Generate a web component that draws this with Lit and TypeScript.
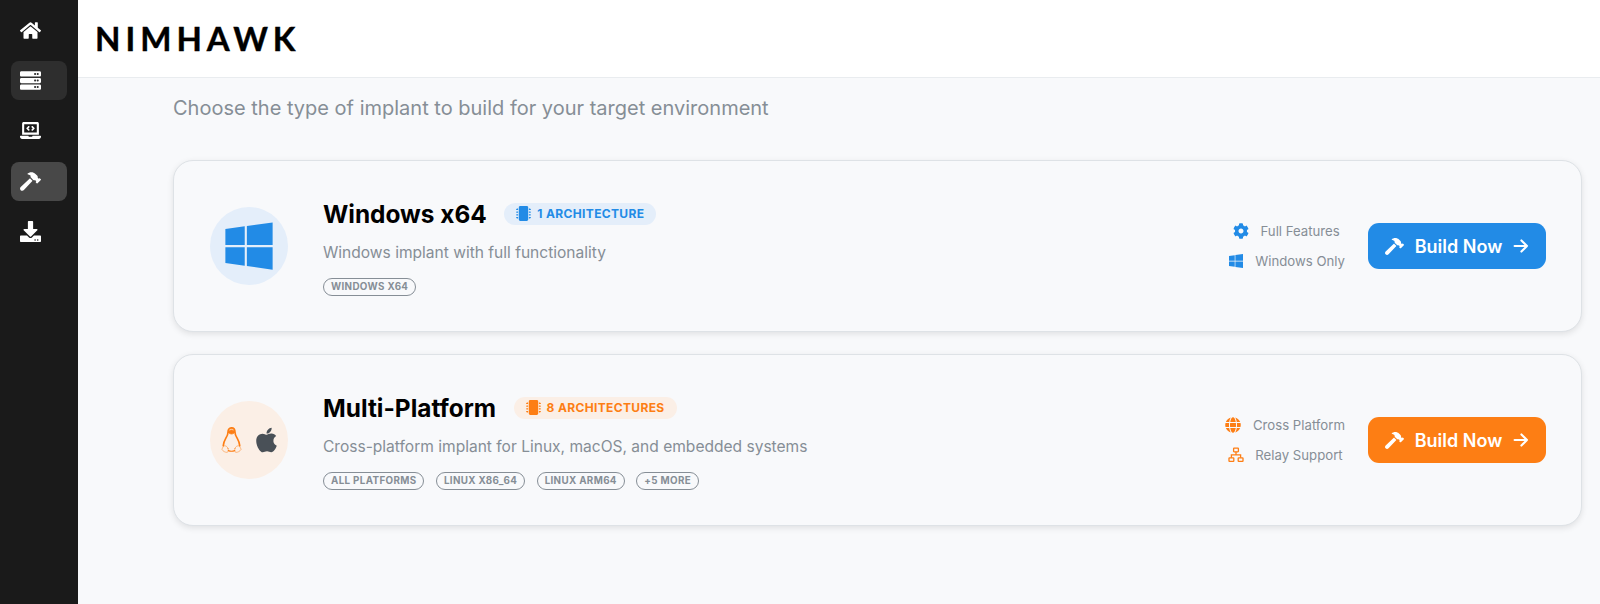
import { LitElement, html, css, svg } from "lit";
import { customElement } from "lit/decorators.js";

const P = {
  home: ["0 0 576 512", "M280.37 148.26L96 300.11V464a16 16 0 0 0 16 16l112.06-.29a16 16 0 0 0 15.92-16V368a16 16 0 0 1 16-16h64a16 16 0 0 1 16 16v95.64a16 16 0 0 0 16 16.05L464 480a16 16 0 0 0 16-16V300L295.67 148.26a12.19 12.19 0 0 0-15.3 0zM571.6 251.47L488 182.56V44.05a12 12 0 0 0-12-12h-56a12 12 0 0 0-12 12v72.61L318.47 43a48 48 0 0 0-61 0L4.34 251.47a12 12 0 0 0-1.6 16.9l25.5 31A12 12 0 0 0 45.15 301l235.22-193.74a12.19 12.19 0 0 1 15.3 0L530.9 301a12 12 0 0 0 16.9-1.6l25.5-31a12 12 0 0 0-1.7-16.93z"],
  server: ["0 0 512 512", "M480 160H32c-17.673 0-32-14.327-32-32V64c0-17.673 14.327-32 32-32h448c17.673 0 32 14.327 32 32v64c0 17.673-14.327 32-32 32zm-48-88c-13.255 0-24 10.745-24 24s10.745 24 24 24 24-10.745 24-24-10.745-24-24-24zm-64 0c-13.255 0-24 10.745-24 24s10.745 24 24 24 24-10.745 24-24-10.745-24-24-24zm112 248H32c-17.673 0-32-14.327-32-32v-64c0-17.673 14.327-32 32-32h448c17.673 0 32 14.327 32 32v64c0 17.673-14.327 32-32 32zm-48-88c-13.255 0-24 10.745-24 24s10.745 24 24 24 24-10.745 24-24-10.745-24-24-24zm-64 0c-13.255 0-24 10.745-24 24s10.745 24 24 24 24-10.745 24-24-10.745-24-24-24zm112 248H32c-17.673 0-32-14.327-32-32v-64c0-17.673 14.327-32 32-32h448c17.673 0 32 14.327 32 32v64c0 17.673-14.327 32-32 32zm-48-88c-13.255 0-24 10.745-24 24s10.745 24 24 24 24-10.745 24-24-10.745-24-24-24zm-64 0c-13.255 0-24 10.745-24 24s10.745 24 24 24 24-10.745 24-24-10.745-24-24-24z"],
  laptop: ["0 0 640 512", "M255.03 261.65c6.25 6.25 16.38 6.25 22.63 0l11.31-11.31c6.25-6.25 6.25-16.38 0-22.63L253.25 192l35.71-35.72c6.25-6.25 6.25-16.38 0-22.63l-11.31-11.31c-6.25-6.25-16.38-6.25-22.63 0l-58.34 58.34c-6.25 6.25-6.25 16.38 0 22.63l58.35 58.34zm96.01-11.3l11.31 11.31c6.25 6.25 16.38 6.25 22.63 0l58.34-58.34c6.25-6.25 6.25-16.38 0-22.63l-58.34-58.34c-6.25-6.25-16.38-6.25-22.63 0l-11.31 11.31c-6.25 6.25-6.25 16.38 0 22.63L386.75 192l-35.71 35.72c-6.25 6.25-6.25 16.38 0 22.63zM624 416H381.54c-.74 19.81-14.71 32-32.74 32H288c-18.69 0-33.02-17.47-32.77-32H16c-8.8 0-16 7.2-16 16v16c0 35.2 28.8 64 64 64h512c35.2 0 64-28.8 64-64v-16c0-8.8-7.2-16-16-16zM576 48c0-26.4-21.6-48-48-48H112C85.6 0 64 21.6 64 48v336h512V48zm-64 272H128V64h384v256z"],
  hammer: ["0 0 576 512", "M571.31 193.94l-22.63-22.63c-6.25-6.25-16.38-6.25-22.63 0l-11.31 11.31-28.9-28.9c5.63-21.31.36-44.9-16.35-61.61l-45.25-45.25c-62.48-62.48-163.79-62.48-226.28 0l90.51 45.25v18.75c0 16.97 6.74 33.25 18.75 45.25l49.14 49.14c16.71 16.71 40.3 21.98 61.61 16.35l28.9 28.9-11.31 11.31c-6.25 6.25-6.25 16.38 0 22.63l22.63 22.63c6.25 6.25 16.38 6.25 22.63 0l90.51-90.51c6.23-6.24 6.23-16.37-.02-22.62zm-286.72-15.2c-3.7-3.7-6.84-7.79-9.85-11.95L19.64 404.96c-25.57 23.88-26.26 64.19-1.53 88.93s65.05 24.05 88.93-1.53l238.13-255.07c-3.96-2.91-7.9-5.87-11.44-9.41l-49.14-49.14z"],
  download: ["0 0 512 512", "M216 0h80c13.3 0 24 10.7 24 24v168h87.7c17.8 0 26.7 21.5 14.1 34.1L269.7 378.3c-7.5 7.5-19.8 7.5-27.3 0L90.1 226.1c-12.6-12.6-3.7-34.1 14.1-34.1H192V24c0-13.3 10.7-24 24-24zm296 376v112c0 13.3-10.7 24-24 24H24c-13.3 0-24-10.7-24-24V376c0-13.3 10.7-24 24-24h146.7l49 49c20.1 20.1 52.5 20.1 72.6 0l49-49H488c13.3 0 24 10.7 24 24zm-124 88c0-11-9-20-20-20s-20 9-20 20 9 20 20 20 20-9 20-20zm64 0c0-11-9-20-20-20s-20 9-20 20 9 20 20 20 20-9 20-20z"],
  windows: ["0 0 448 512", "M0 93.7l183.6-25.3v177.4H0V93.7zm0 324.6l183.6 25.3V268.4H0v149.9zm203.8 28L448 480V268.4H203.8v177.9zm0-380.6v180.1H448V32L203.8 65.7z"],
  apple: ["0 0 384 512", "M318.7 268.7c-.2-36.7 16.4-64.4 50-84.8-18.8-26.9-47.2-41.7-84.7-44.6-35.5-2.8-74.3 20.7-88.5 20.7-15 0-49.4-19.7-76.4-19.7C63.3 141.2 4 184.8 4 273.5q0 39.3 14.4 81.2c12.8 36.7 59 126.7 107.2 125.2 25.2-.6 43-17.9 75.8-17.9 31.8 0 48.3 17.9 76.4 17.9 48.6-.7 90.4-82.5 102.6-119.3-65.2-30.7-61.7-90-61.7-91.9zm-56.6-164.2c27.3-32.4 24.8-61.9 24-72.5-24.1 1.4-52 16.4-67.9 34.9-17.5 19.8-27.8 44.3-25.6 71.9 26.1 2 49.9-11.4 69.5-34.3z"],
  cog: ["0 0 512 512", "M487.4 315.7l-42.6-24.6c4.3-23.2 4.3-47 0-70.2l42.6-24.6c4.9-2.8 7.1-8.6 5.5-14-11.1-35.6-30-67.8-54.7-94.6-3.8-4.1-10-5.1-14.8-2.3L380.8 110c-17.9-15.4-38.5-27.3-60.8-35.1V25.8c0-5.6-3.9-10.5-9.4-11.7-36.7-8.2-74.3-7.8-109.2 0-5.5 1.2-9.4 6.1-9.4 11.7V75c-22.2 7.9-42.8 19.8-60.8 35.1L88.7 85.5c-4.9-2.8-11-1.9-14.8 2.3-24.7 26.7-43.6 58.9-54.7 94.6-1.7 5.4.6 11.2 5.5 14L67.3 221c-4.3 23.2-4.3 47 0 70.2l-42.6 24.6c-4.9 2.8-7.1 8.6-5.5 14 11.1 35.6 30 67.8 54.7 94.6 3.8 4.1 10 5.1 14.8 2.3l42.6-24.6c17.9 15.4 38.5 27.3 60.8 35.1v49.2c0 5.6 3.9 10.5 9.4 11.7 36.7 8.2 74.3 7.8 109.2 0 5.5-1.2 9.4-6.1 9.4-11.7v-49.2c22.2-7.9 42.8-19.8 60.8-35.1l42.6 24.6c4.9 2.8 11 1.9 14.8-2.3 24.7-26.7 43.6-58.9 54.7-94.6 1.5-5.5-.7-11.3-5.6-14.1zM256 336c-44.1 0-80-35.9-80-80s35.9-80 80-80 80 35.9 80 80-35.9 80-80 80z"],
  microchip: ["0 0 512 512", "M416 48v416c0 26.51-21.49 48-48 48H144c-26.51 0-48-21.49-48-48V48c0-26.51 21.49-48 48-48h224c26.51 0 48 21.49 48 48zm96 58v12a6 6 0 0 1-6 6h-18v6a6 6 0 0 1-6 6h-42V88h42a6 6 0 0 1 6 6v6h18a6 6 0 0 1 6 6zm0 96v12a6 6 0 0 1-6 6h-18v6a6 6 0 0 1-6 6h-42v-48h42a6 6 0 0 1 6 6v6h18a6 6 0 0 1 6 6zm0 96v12a6 6 0 0 1-6 6h-18v6a6 6 0 0 1-6 6h-42v-48h42a6 6 0 0 1 6 6v6h18a6 6 0 0 1 6 6zm0 96v12a6 6 0 0 1-6 6h-18v6a6 6 0 0 1-6 6h-42v-48h42a6 6 0 0 1 6 6v6h18a6 6 0 0 1 6 6zM30 376h42v48H30a6 6 0 0 1-6-6v-6H6a6 6 0 0 1-6-6v-12a6 6 0 0 1 6-6h18v-6a6 6 0 0 1 6-6zm0-96h42v48H30a6 6 0 0 1-6-6v-6H6a6 6 0 0 1-6-6v-12a6 6 0 0 1 6-6h18v-6a6 6 0 0 1 6-6zm0-96h42v48H30a6 6 0 0 1-6-6v-6H6a6 6 0 0 1-6-6v-12a6 6 0 0 1 6-6h18v-6a6 6 0 0 1 6-6zm0-96h42v48H30a6 6 0 0 1-6-6v-6H6a6 6 0 0 1-6-6v-12a6 6 0 0 1 6-6h18v-6a6 6 0 0 1 6-6z"],
  globe: ["0 0 496 512", "M336.5 160C322 70.7 287.8 8 248 8s-74 62.7-88.5 152h177zM152 256c0 22.2 1.2 43.5 3.3 64h185.3c2.1-20.5 3.3-41.8 3.3-64s-1.2-43.5-3.3-64H155.3c-2.1 20.5-3.3 41.8-3.3 64zm324.7-96c-28.6-67.9-86.5-120.4-158-141.6 24.4 33.8 41.2 84.7 50 141.6h108zM177.2 18.4C105.8 39.6 47.8 92.1 19.3 160h108c8.7-56.9 25.5-107.8 49.9-141.6zM487.4 192H372.7c2.1 21 3.3 42.5 3.3 64s-1.2 43-3.3 64h114.6c5.5-20.5 8.6-41.8 8.6-64s-3.1-43.5-8.5-64zM120 256c0-21.5 1.2-43 3.3-64H8.6C3.2 212.5 0 233.8 0 256s3.2 43.5 8.6 64h114.6c-2-21-3.2-42.5-3.2-64zm39.5 96c14.5 89.3 48.7 152 88.5 152s74-62.7 88.5-152h-177zm159.3 141.6c71.4-21.2 129.4-73.7 158-141.6h-108c-8.8 56.9-25.6 107.8-50 141.6zM19.3 352c28.6 67.9 86.5 120.4 158 141.6-24.4-33.8-41.2-84.7-50-141.6h-108z"],
} as const;

type IconName = keyof typeof P;

const icon = (name: IconName, cls: string) =>
  html`<svg class=${cls} viewBox=${P[name][0]} fill="currentColor" aria-hidden="true">${svg`<path d=${P[name][1]}></path>`}</svg>`;

const arrow = html`<svg class="arrow" viewBox="0 0 16 16" fill="none" stroke="currentColor" stroke-width="2.1" stroke-linecap="round" stroke-linejoin="round">
  <path d="M1.6 8h12.4M8.4 2.4 14 8l-5.6 5.6"></path></svg>`;

const network = html`<svg class="fi" viewBox="0 0 16 16" fill="none" stroke="currentColor" stroke-width="1.3">
  <rect x="5.6" y="1.2" width="4.8" height="3.6" rx=".5"></rect>
  <rect x="1" y="10.8" width="4.8" height="3.6" rx=".5"></rect>
  <rect x="10.2" y="10.8" width="4.8" height="3.6" rx=".5"></rect>
  <path d="M8 4.8v3M3.4 10.8V7.8h9.2v3"></path></svg>`;

const tux = html`<svg class="tux" viewBox="0 0 24 32" fill="none" stroke="currentColor" stroke-width="1.9" stroke-linejoin="round" stroke-linecap="round">
  <path d="M12 1.5c-3 0-4 2.4-4 5 0 2.8-1.2 4.6-2.6 7-1.4 2.4-2.4 5-2.8 8.4"></path>
  <path d="M12 1.5c3 0 4 2.4 4 5 0 2.8 1.2 4.6 2.6 7 1.4 2.4 2.4 5 2.8 8.4"></path>
  <path d="M8.4 6.6C9.4 3 14.6 3 15.6 6.6 14 9.2 10 9.2 8.4 6.6z" fill="currentColor" stroke-width="1"></path>
  <path class="foot" d="M8 25c-1-2.6-3-3.6-5.2-2.6L1 26c1.4 2.6 3.6 3.4 6 3.6 1.6-.6 1.6-3 1-4.6z"></path>
  <path class="foot" d="M16 25c1-2.6 3-3.6 5.2-2.6L23 26c-1.4 2.6-3.6 3.4-6 3.6-1.6-.6-1.6-3-1-4.6z"></path>
  <path d="M8.4 27.6c2.4.9 4.8.9 7.2 0" stroke-width="1.4"></path></svg>`;

const sidebar: { icon: IconName; box: string }[] = [
  { icon: "home", box: "" },
  { icon: "server", box: "dim" },
  { icon: "laptop", box: "" },
  { icon: "hammer", box: "bright" },
  { icon: "download", box: "" },
];

@customElement("app-root")
export class AppRoot extends LitElement {
  static styles = css`
    :host {
      display: flex;
      width: 1600px;
      height: 604px;
      overflow: hidden;
      font-family: Inter, "Liberation Sans", sans-serif;
      background: #f8f9fb;
      color: #000;
    }
    .side {
      width: 78px;
      flex: none;
      background: #1a1a1a;
      display: flex;
      flex-direction: column;
      gap: 11.2px;
      padding: 11px 11px 0;
      box-sizing: border-box;
    }
    .nav {
      height: 39px;
      border-radius: 8px;
      display: flex;
      align-items: center;
      padding-left: 9px;
      color: #fff;
    }
    .nav.dim { background: #2e2e2e; }
    .nav.bright { background: #484848; }
    .nav-i { width: 21px; height: 21px; display: block; }
    .main { flex: 1; min-width: 0; display: flex; flex-direction: column; }
    .head {
      height: 77px;
      flex: none;
      background: #fff;
      border-bottom: 1px solid #e9ecef;
      display: flex;
      align-items: center;
      padding-left: 17px;
    }
    .logo {
      font-family: Lato, Inter, sans-serif;
      font-weight: 700;
      font-size: 33px;
      letter-spacing: 5px;
      line-height: 1;
      color: #000;
      -webkit-text-stroke: 0.4px #000;
    }
    .content { padding: 15px 18px 0 95px; }
    .sub { font-size: 20px; line-height: 30px; color: #868e96; margin: 0; }
    .cards { margin-top: 37px; display: flex; flex-direction: column; gap: 22px; }
    .card {
      height: 172px;
      box-sizing: border-box;
      border: 1px solid #dee2e6;
      border-radius: 20px;
      background: #f8f9fb;
      box-shadow: 0 2px 6px rgba(0, 0, 0, 0.1);
      display: flex;
      align-items: center;
      padding: 0 35px 0 36px;
    }
    .disc {
      width: 78px;
      height: 78px;
      border-radius: 50%;
      flex: none;
      display: flex;
      align-items: center;
      justify-content: center;
      margin-right: 35px;
    }
    .blue .disc { background: #e4eefa; color: #228be6; }
    .orange .disc { background: #fbefe6; color: #fd7e14; gap: 14px; }
    .win { width: 48px; height: 54px; }
    .tux { width: 21px; height: 29px; }
    .foot { stroke-width: 1; opacity: 0.55; }
    .apple { width: 21px; height: 28px; color: #495057; }
    .body { flex: 1; min-width: 0; }
    .title { display: flex; align-items: center; gap: 17.5px; }
    .title h3 { margin: 0; font-size: 24.4px; line-height: 34px; font-weight: 700; }
    .badge {
      height: 22px;
      border-radius: 11px;
      padding: 0 12px;
      display: flex;
      align-items: center;
      gap: 6px;
      font-size: 12px;
      font-weight: 700;
      letter-spacing: 0.35px;
    }
    .blue .badge { background: #e4eefa; color: #228be6; }
    .orange .badge { background: #fbefe6; color: #fd7e14; }
    .chip { width: 15px; height: 15px; }
    .desc { margin: 10px 0 0; font-size: 15.55px; line-height: 23px; color: #868e96; }
    .tags { display: flex; gap: 11.5px; margin-top: 14px; }
    .tag {
      height: 18px;
      box-sizing: border-box;
      border: 1px solid #868e96;
      border-radius: 9px;
      padding: 0 7px;
      display: flex;
      align-items: center;
      font-size: 9.8px;
      font-weight: 700;
      letter-spacing: 0.35px;
      color: #868e96;
    }
    .right { display: flex; align-items: center; gap: 23px; }
    .feats { display: flex; flex-direction: column; gap: 12px; align-items: center; }
    .feat { display: flex; align-items: center; gap: 11.5px; font-size: 13.2px; line-height: 18px; color: #868e96; }
    .fi { width: 16px; height: 16px; flex: none; }
    .blue .fi { color: #228be6; }
    .orange .fi { color: #fd7e14; }
    .btn {
      width: 178px;
      height: 46px;
      border-radius: 11px;
      border: none;
      color: #fff;
      font: 600 18px Inter, sans-serif;
      display: flex;
      align-items: center;
      justify-content: center;
      gap: 11px;
      padding: 0;
    }
    .blue .btn { background: #228be6; }
    .orange .btn { background: #fd7e14; }
    .bh { width: 19px; height: 19px; }
    .arrow { width: 16px; height: 16px; }
  `;

  private card(
    tone: string,
    disc: unknown,
    title: string,
    badge: string,
    desc: string,
    tags: string[],
    feats: [unknown, string][],
  ) {
    return html`<section class="card ${tone}">
      <div class="disc">${disc}</div>
      <div class="body">
        <div class="title">
          <h3>${title}</h3>
          <span class="badge">${icon("microchip", "chip")}${badge}</span>
        </div>
        <p class="desc">${desc}</p>
        <div class="tags">${tags.map((t) => html`<span class="tag">${t}</span>`)}</div>
      </div>
      <div class="right">
        <div class="feats">
          ${feats.map(([i, t]) => html`<div class="feat">${i}<span>${t}</span></div>`)}
        </div>
        <button class="btn">${icon("hammer", "bh")}<span>Build Now</span>${arrow}</button>
      </div>
    </section>`;
  }

  render() {
    return html`
      <nav class="side">
        ${sidebar.map((s) => html`<div class="nav ${s.box}">${icon(s.icon, "nav-i")}</div>`)}
      </nav>
      <div class="main">
        <header class="head"><span class="logo">NIMHAWK</span></header>
        <div class="content">
          <p class="sub">Choose the type of implant to build for your target environment</p>
          <div class="cards">
            ${this.card(
              "blue",
              icon("windows", "win"),
              "Windows x64",
              "1 ARCHITECTURE",
              "Windows implant with full functionality",
              ["WINDOWS X64"],
              [[icon("cog", "fi"), "Full Features"], [icon("windows", "fi"), "Windows Only"]],
            )}
            ${this.card(
              "orange",
              html`${tux}${icon("apple", "apple")}`,
              "Multi-Platform",
              "8 ARCHITECTURES",
              "Cross-platform implant for Linux, macOS, and embedded systems",
              ["ALL PLATFORMS", "LINUX X86_64", "LINUX ARM64", "+5 MORE"],
              [[icon("globe", "fi"), "Cross Platform"], [network, "Relay Support"]],
            )}
          </div>
        </div>
      </div>`;
  }
}
